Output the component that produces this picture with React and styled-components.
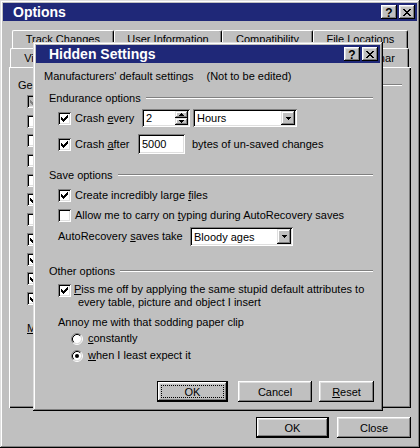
import React from 'react'
import styled, { createGlobalStyle, css } from 'styled-components'

const GlobalStyle = createGlobalStyle`
  html, body {
    margin: 0;
    padding: 0;
    background: #c0c0c0;
  }
  body {
    font-family: "Liberation Sans", Arial, sans-serif;
    font-size: 11px;
    color: #000;
  }
`

const frame = css`
  box-shadow: inset -1px -1px #000, inset 1px 1px #dfdfdf, inset -2px -2px #808080, inset 2px 2px #fff;
`
const sunken = css`
  box-shadow: inset 1px 1px #808080, inset -1px -1px #fff, inset 2px 2px #000, inset -2px -2px #dfdfdf;
`

const Root = styled.div`
  position: relative;
  width: 420px;
  height: 448px;
`

const Window = styled.div`
  box-sizing: border-box;
  width: 100%;
  height: 100%;
  padding: 3px;
  background: #c0c0c0;
  display: flex;
  flex-direction: column;
  ${frame}
`

const Dialog = styled(Window)`
  position: absolute;
  left: 33px;
  top: 42px;
  width: 350px;
  height: 369px;
`

const TitleBar = styled.div`
  flex: none;
  height: 18px;
  background: #1f2878;
  display: flex;
  align-items: center;
  padding: 0 2px 0 ${p => p.$indent}px;
`

const TitleText = styled.span`
  flex: 1;
  color: #fff;
  font-weight: bold;
  font-size: 14px;
  white-space: nowrap;
`

const CaptionButton = styled.div`
  box-sizing: border-box;
  width: 16px;
  height: 14px;
  background: #c0c0c0;
  display: flex;
  align-items: center;
  justify-content: center;
  font-weight: bold;
  font-size: 12px;
  line-height: 14px;
  padding-top: 1px;
  box-shadow: inset -1px -1px #000, inset 1px 1px #fff, inset -2px -2px #808080, inset 2px 2px #dfdfdf;
  & + & {
    margin-left: 2px;
  }
`

const OuterBody = styled.div`
  flex: 1;
  display: flex;
  flex-direction: column;
  padding: 9px 6px 7px;
`

const TabRow = styled.div`
  flex: none;
  display: flex;
  height: ${p => p.$h}px;
  margin: 0 ${p => p.$r}px 0 ${p => p.$l}px;
`

const Tab = styled.div`
  box-sizing: border-box;
  flex: 1 1 auto;
  display: flex;
  align-items: center;
  justify-content: center;
  padding: 0 6px 1px;
  white-space: nowrap;
  border-top: 1px solid #fff;
  border-left: 1px solid #fff;
  border-right: 1px solid #000;
  border-radius: 2px 2px 0 0;
  box-shadow: inset -1px 0 #808080;
`

const Panel = styled.div`
  flex: 1;
  display: flex;
  flex-direction: column;
  padding: 9px 9px 0;
  box-shadow: inset 1px 1px #fff, inset -1px -1px #000, inset -2px -2px #808080;
`

const Footer = styled.div`
  flex: none;
  display: flex;
  justify-content: flex-end;
  gap: 8px;
  margin-top: 9px;
`

const DialogBody = styled.div`
  flex: 1;
  display: flex;
  flex-direction: column;
  padding: 0 7px 0 8px;
`

const Row = styled.div`
  flex: none;
  display: flex;
  align-items: ${p => (p.$top ? 'flex-start' : 'center')};
  height: ${p => p.$h}px;
  margin-top: ${p => p.$mt || 0}px;
  padding-left: ${p => p.$indent || 0}px;
  white-space: nowrap;
`

const Heading = styled.div`
  flex: none;
  display: flex;
  align-items: center;
  height: ${p => p.$h || 18}px;
  margin-top: ${p => p.$mt || 0}px;
  padding-left: ${p => p.$indent || 0}px;
  white-space: nowrap;
  &::after {
    content: '';
    flex: 1;
    height: 0;
    margin-left: 5px;
    border-top: 1px solid #808080;
    border-bottom: 1px solid #fff;
  }
`

const U = styled.span`
  text-decoration: underline;
`

const Gap = styled.span`
  margin-left: ${p => p.$w}px;
`

const Label = styled.span`
  display: inline-block;
  margin-left: ${p => p.$ml || 0}px;
  width: ${p => (p.$w ? `${p.$w}px` : 'auto')};
  line-height: 13px;
`

const Line = styled.span`
  display: block;
  padding-left: ${p => p.$indent || 0}px;
`

const Box = styled.span`
  flex: none;
  display: block;
  width: 13px;
  height: 13px;
  margin-top: ${p => p.$mt || 0}px;
  background: ${p => (p.$disabled ? '#c0c0c0' : '#fff')};
  ${sunken}
  svg {
    display: block;
  }
`

const Field = styled.div`
  box-sizing: border-box;
  flex: none;
  width: ${p => p.$w}px;
  height: ${p => p.$h}px;
  margin-left: ${p => p.$ml || 0}px;
  background: #fff;
  display: flex;
  align-items: center;
  padding: 2px 2px 2px 4px;
  ${sunken}
`

const FieldText = styled.span`
  flex: 1;
`

const SpinColumn = styled.div`
  width: 13px;
  height: 100%;
  display: flex;
  flex-direction: column;
`

const SmallButton = styled.div`
  flex: ${p => (p.$stack ? 1 : 'none')};
  width: ${p => p.$w || 13}px;
  height: ${p => (p.$stack ? 'auto' : '100%')};
  background: #c0c0c0;
  display: flex;
  align-items: center;
  justify-content: center;
  ${frame}
  svg {
    display: block;
  }
`

const Button = styled.button`
  position: relative;
  box-sizing: border-box;
  flex: none;
  width: ${p => p.$w}px;
  height: 21px;
  margin: 0;
  padding: 0;
  border: none;
  background: #c0c0c0;
  font: 11px "Liberation Sans", Arial, sans-serif;
  color: #000;
  box-shadow: inset -1px -1px #000, inset 1px 1px #fff, inset -2px -2px #808080, inset 2px 2px #dfdfdf;
  ${p =>
    p.$default &&
    css`
      box-shadow: inset 0 0 0 1px #000, inset -2px -2px #000, inset 2px 2px #fff, inset -3px -3px #808080,
        inset 3px 3px #dfdfdf;
    `}
  ${p =>
    p.$focus &&
    css`
      &::after {
        content: '';
        position: absolute;
        inset: 4px;
        border: 1px dotted #000;
      }
    `}
`

const ButtonRow = styled.div`
  flex: none;
  display: flex;
  justify-content: flex-end;
  margin-top: 17px;
  margin-right: -1px;
`

const ButtonGap = styled.span`
  width: ${p => p.$w}px;
`

// the labels of these boxes sit under the Hidden Settings window, only the boxes peek out
const CheckList = styled.div`
  display: flex;
  flex-direction: column;
  padding-left: 9px;
`

const CheckRow = styled.div`
  height: 19.7px;
  display: flex;
  align-items: flex-start;
`

const Check = ({ checked, disabled, mt }) => (
  <Box $disabled={disabled} $mt={mt}>
    {checked && (
      <svg width="13" height="13" shapeRendering="crispEdges">
        <path
          d="M9 3h1v3H9zM8 4h1v3H8zM7 5h1v3H7zM6 6h1v3H6zM5 7h1v3H5zM4 6h1v3H4zM3 5h1v3H3z"
          fill={disabled ? '#808080' : '#000'}
        />
      </svg>
    )}
  </Box>
)

const Radio = ({ checked }) => (
  <svg width="12" height="12" style={{ flex: 'none', display: 'block' }}>
    <circle cx="6" cy="6" r="4.2" fill="#fff" />
    <path d="M9.89 2.11 A5.5 5.5 0 0 0 2.11 9.89" fill="none" stroke="#808080" />
    <path d="M2.11 9.89 A5.5 5.5 0 0 0 9.89 2.11" fill="none" stroke="#fff" />
    <path d="M9.18 2.82 A4.5 4.5 0 0 0 2.82 9.18" fill="none" stroke="#000" />
    <path d="M2.82 9.18 A4.5 4.5 0 0 0 9.18 2.82" fill="none" stroke="#dfdfdf" />
    {checked && <circle cx="6" cy="6" r="2" fill="#000" />}
  </svg>
)

const Arrow = ({ up }) => (
  <svg width="5" height="3" shapeRendering="crispEdges">
    <path d={up ? 'M2 0h1v1H2zM1 1h3v1H1zM0 2h5v1H0z' : 'M0 0h5v1H0zM1 1h3v1H1zM2 2h1v1H2z'} fill="#000" />
  </svg>
)

const CloseGlyph = () => (
  <svg width="8" height="7" shapeRendering="crispEdges" style={{ display: 'block', marginTop: -1 }}>
    <path
      d="M0 0h2v1H0zM6 0h2v1H6zM1 1h2v1H1zM5 1h2v1H5zM2 2h4v1H2zM3 3h2v1H3zM2 4h4v1H2zM1 5h2v1H1zM5 5h2v1H5zM0 6h2v1H0zM6 6h2v1H6z"
      fill="#000"
    />
  </svg>
)

const Caption = ({ title, indent }) => (
  <TitleBar $indent={indent}>
    <TitleText>{title}</TitleText>
    <CaptionButton>?</CaptionButton>
    <CaptionButton>
      <CloseGlyph />
    </CaptionButton>
  </TitleBar>
)

const Dropdown = ({ value, w, h, ml }) => (
  <Field $w={w} $h={h} $ml={ml}>
    <FieldText>{value}</FieldText>
    <SmallButton $w={14}>
      <Arrow />
    </SmallButton>
  </Field>
)

const generalBoxes = [
  { checked: true, disabled: true },
  {},
  {},
  {},
  {},
  { checked: true },
  {},
  { checked: true },
  { checked: true },
  { checked: true },
  { checked: true },
]

const OptionsWindow = () => (
  <Window>
    <Caption title="Options" indent={10} />
    <OuterBody>
      <TabRow $h={18} $l={3} $r={3}>
        <Tab>Track Changes</Tab>
        <Tab>User Information</Tab>
        <Tab>Compatibility</Tab>
        <Tab>File Locations</Tab>
      </TabRow>
      <TabRow $h={19} $l={1} $r={2}>
        <Tab>View</Tab>
        <Tab>General</Tab>
        <Tab>Edit</Tab>
        <Tab>Print</Tab>
        <Tab>Save</Tab>
        <Tab>Spelling &amp; Grammar</Tab>
      </TabRow>
      <Panel>
        <Heading $h={18}>General options</Heading>
        <CheckList>
          {generalBoxes.map((box, i) => (
            <CheckRow key={i}>
              <Check checked={box.checked} disabled={box.disabled} mt={1} />
            </CheckRow>
          ))}
        </CheckList>
        <Row $h={14} $mt={10} $indent={9}>
          <U>M</U>easurement units:
        </Row>
      </Panel>
      <Footer>
        <Button $w={73} $default>
          OK
        </Button>
        <Button $w={74}>Close</Button>
      </Footer>
    </OuterBody>
  </Window>
)

const HiddenSettings = () => (
  <Dialog>
    <Caption title="Hidden Settings" indent={13} />
    <DialogBody>
      <Row $h={26}>
        Manufacturers' default settings<Gap $w={13} />(Not to be edited)
      </Row>

      <Heading $indent={5}>Endurance options</Heading>
      <Row $h={22} $indent={14}>
        <Check checked />
        <Label $ml={4} $w={66}>
          Crash <U>e</U>very
        </Label>
        <Field $w={48} $h={18} $ml={1}>
          <FieldText>2</FieldText>
          <SpinColumn>
            <SmallButton $stack>
              <Arrow up />
            </SmallButton>
            <SmallButton $stack>
              <Arrow />
            </SmallButton>
          </SpinColumn>
        </Field>
        <Dropdown value="Hours" w={104} h={18} ml={3} />
      </Row>
      <Row $h={22} $mt={4} $indent={14}>
        <Check checked />
        <Label $ml={4} $w={62}>
          Crash <U>a</U>fter
        </Label>
        <Field $w={47} $h={20} $ml={1}>
          <FieldText>5000</FieldText>
        </Field>
        <Label $ml={7}>bytes of un-saved changes</Label>
      </Row>

      <Heading $indent={5} $mt={11}>
        Save options
      </Heading>
      <Row $h={20} $mt={1} $indent={14}>
        <Check checked />
        <Label $ml={4}>
          Create incredibly large <U>f</U>iles
        </Label>
      </Row>
      <Row $h={21} $indent={14}>
        <Check />
        <Label $ml={4}>
          Allow me to carry on <U>t</U>yping during AutoRecovery saves
        </Label>
      </Row>
      <Row $h={21} $indent={14}>
        <Label $w={130}>
          AutoRecovery <U>s</U>aves take
        </Label>
        <Dropdown value="Bloody ages" w={103} h={19} ml={2} />
      </Row>

      <Heading $indent={5} $mt={15}>
        Other options
      </Heading>
      <Row $h={26} $mt={3} $indent={14} $top>
        <Check checked mt={1} />
        <Label $ml={3}>
          <Line>
            <U>P</U>iss me off by applying the same stupid default attributes to
          </Line>
          <Line $indent={4}>every table, picture and object I insert</Line>
        </Label>
      </Row>
      <Row $h={17} $mt={4} $indent={14}>
        Annoy me with that sodding paper clip
      </Row>
      <Row $h={17} $indent={27}>
        <Radio />
        <Label $ml={5}>
          <U>c</U>onstantly
        </Label>
      </Row>
      <Row $h={17} $indent={27}>
        <Radio checked />
        <Label $ml={5}>
          <U>w</U>hen I least expect it
        </Label>
      </Row>

      <ButtonRow>
        <Button $w={71} $default $focus>
          OK
        </Button>
        <ButtonGap $w={10} />
        <Button $w={74}>Cancel</Button>
        <ButtonGap $w={7} />
        <Button $w={55}>
          <U>R</U>eset
        </Button>
      </ButtonRow>
    </DialogBody>
  </Dialog>
)

const App = () => (
  <Root>
    <GlobalStyle />
    <OptionsWindow />
    <HiddenSettings />
  </Root>
)

export default App
